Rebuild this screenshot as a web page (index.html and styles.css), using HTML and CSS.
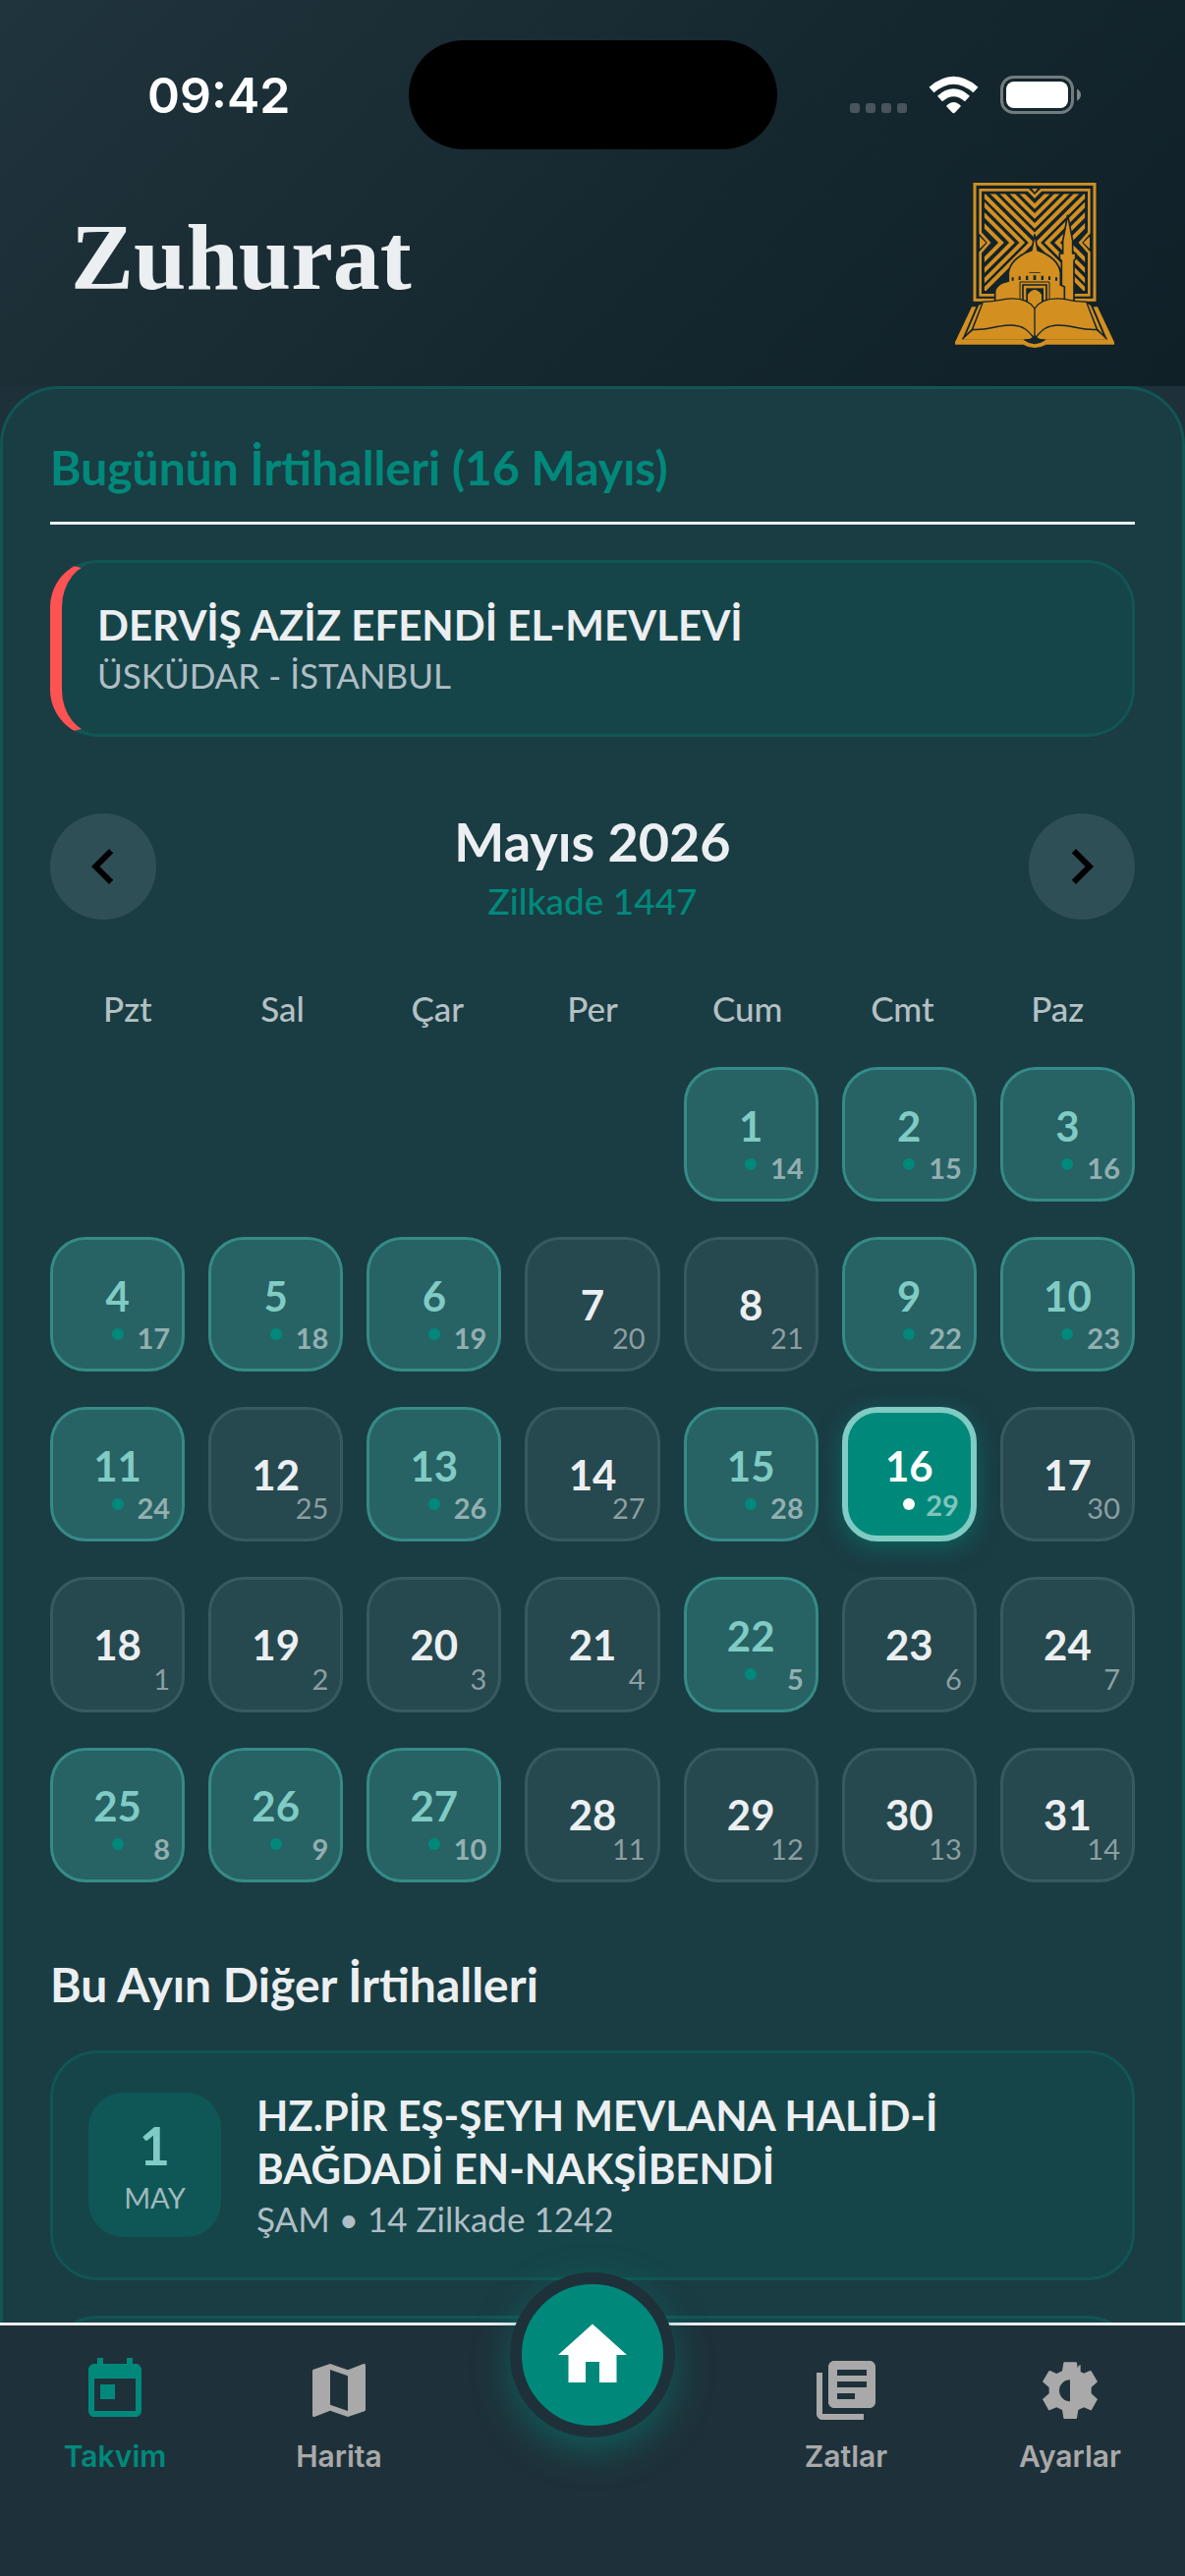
FILE: index.html
```html
<!DOCTYPE html>
<html lang="tr">
<head>
<meta charset="utf-8">
<meta name="viewport" content="width=device-width, initial-scale=1">
<title>Zuhurat</title>
<link rel="stylesheet" href="styles.css">
</head>
<body>
<div class="app">
  <header class="top">
    <div class="status">
      <time class="clock">09:42</time>
      <div class="island"></div>
      <svg class="status-icons" viewBox="0 0 236 40" aria-hidden="true">
        <g fill="#fff" fill-opacity=".22"><rect y="28" width="10" height="10" rx="3"/><rect x="16" y="28" width="10" height="10" rx="3"/><rect x="32" y="28" width="10" height="10" rx="3"/><rect x="48" y="28" width="10" height="10" rx="3"/></g>
        <g fill="none" stroke="#fff" stroke-width="7.500"><path d="M83 14.500Q105.500-5 128 14.500"/><path d="M91.500 23.500Q105.500 11 119.500 23.500"/></g>
        <path fill="#fff" d="M98 31Q105.500 23 113 31L107 37.500Q105.500 39 104 37.500Z"/>
        <rect x="154.500" y="1.500" width="72" height="36" rx="12" fill="none" stroke="#fff" stroke-opacity=".4" stroke-width="3"/>
        <rect x="159" y="6" width="63" height="27" rx="8" fill="#fff"/>
        <path fill="#fff" fill-opacity=".45" d="M231 13.500Q235 15.500 235 19.500T231 25.500Z"/>
      </svg>
    </div>
    <div class="brand">
      <h1 class="brand-name">Zuhurat</h1>
      <svg class="logo" viewBox="66 48 486 504" role="img" aria-label="Zuhurat">
        <defs><clipPath id="field"><path d="M155 82H288L309 100 330 82H463V205L440 231 463 255V378H155V255L178 231 155 205Z"/></clipPath></defs>
        <g fill="none" stroke="#d38f20">
          <rect x="126" y="52" width="366" height="354" stroke-width="9"/>
          <path stroke-width="8" d="M143 70H289L309 90 329 70H475V201L448 231 475 261V391H143V261L170 231 143 201Z"/>
          <g clip-path="url(#field)" stroke-width="12">
            <path d="M229 40 309 120 389 40M189 30 309 150 429 30M159 30 309 180 459 30M129 30 309 208 489 30"/>
            <path d="M52 76 207 231 52 386M85 76 240 231 85 386M116 76 271 231 116 386M144 76 299 231 144 386"/>
            <path d="M566 76 411 231 566 386M533 76 378 231 533 386M502 76 347 231 502 386M474 76 319 231 474 386"/>
          </g>
        </g>
        <path fill="#d38f20" d="M300 66H318L309 77ZM141 212 160 231 141 250ZM477 212 458 231 477 250Z"/>
        <g fill="#d38f20" stroke="#14252c" stroke-width="5">
          <path d="M410 146 425 225V264H434V280L429 286V410H391V286L385 280V264H395V225Z"/>
          <path d="M188 410V380Q190 362 215 352L229 348V322Q236 278 300 254L309 205 318 254Q381 278 388 322V360L400 366V410Z"/>
        </g>
        <g fill="#14252c"><path d="M239 337h6v10h-6zM260 334h6v11h-6zM282 332h7v13h-7zM305 331h8v14h-8zM329 332h7v13h-7zM351 334h6v11h-6zM372 337h6v10h-6zM292 321h34v2h-34z"/></g>
        <g fill="none" stroke="#14252c"><path stroke-width="3" d="M264 410V351H354V410"/><path stroke-width="5" d="M273 410V360H345V410"/></g>
        <path fill="#14252c" d="M283 410V370H336V410Z"/>
        <path fill="#d38f20" d="M288 410V390Q292 380 309 374Q326 380 330 390V440H288Z"/>
        <path fill="#d38f20" stroke="#14252c" stroke-width="4" d="M150 412Q190 410 220 403Q285 396 309 432Q333 396 398 403Q428 410 468 412L500 498 535 528H83L118 498Z"/>
        <path fill="#d38f20" d="M117 427H130L88 526H275Q309 552 343 526H530L488 427H501L552 535V542H344Q309 562 274 542H66V535Z"/>
        <path fill="#d38f20" d="M138 423 150 416 120 494 98 516ZM480 423 468 416 498 494 520 516Z"/>
        <path fill="none" stroke="#14252c" stroke-width="4" d="M309 430V520M118 496C165 500 195 482 240 483 280 485 292 505 307 522M500 496C453 500 423 482 378 483 338 485 326 505 311 522M88 526 118 496 150 415M530 526 500 496 468 415"/>
        <path fill="#14252c" d="M275 528Q300 526 309 512 318 526 343 528 326 540 309 541 292 540 275 528Z"/>
      </svg>
    </div>
  </header>

  <main class="scroll">
    <div class="panel">
      <section>
        <h2 class="section-title section-title--today">Bugünün İrtihalleri (16 Mayıs)</h2>
        <article class="card card--today">
          <h3 class="card-name">DERVİŞ AZİZ EFENDİ EL-MEVLEVİ</h3>
          <p class="card-meta">ÜSKÜDAR - İSTANBUL</p>
        </article>
      </section>

      <section class="calendar">
        <div class="month">
          <button class="round" type="button" aria-label="Önceki ay"><svg class="icon" viewBox="0 0 24 24"><path d="M15.410 7.410 14 6l-6 6 6 6 1.410-1.410L10.830 12z"/></svg></button>
          <div class="month-text">
            <h2 class="month-name">Mayıs 2026</h2>
            <p class="month-hijri">Zilkade 1447</p>
          </div>
          <button class="round" type="button" aria-label="Sonraki ay"><svg class="icon" viewBox="0 0 24 24"><path d="M10 6 8.590 7.410 13.170 12l-4.580 4.590L10 18l6-6z"/></svg></button>
        </div>
        <div class="weekdays"><span>Pzt</span><span>Sal</span><span>Çar</span><span>Per</span><span>Cum</span><span>Cmt</span><span>Paz</span></div>
        <div class="days">
          <button class="day day--event day--first" type="button"><span class="num">1</span><i class="dot"></i><small class="hijri">14</small></button>
          <button class="day day--event" type="button"><span class="num">2</span><i class="dot"></i><small class="hijri">15</small></button>
          <button class="day day--event" type="button"><span class="num">3</span><i class="dot"></i><small class="hijri">16</small></button>
          <button class="day day--event" type="button"><span class="num">4</span><i class="dot"></i><small class="hijri">17</small></button>
          <button class="day day--event" type="button"><span class="num">5</span><i class="dot"></i><small class="hijri">18</small></button>
          <button class="day day--event" type="button"><span class="num">6</span><i class="dot"></i><small class="hijri">19</small></button>
          <button class="day" type="button"><span class="num">7</span><small class="hijri">20</small></button>
          <button class="day" type="button"><span class="num">8</span><small class="hijri">21</small></button>
          <button class="day day--event" type="button"><span class="num">9</span><i class="dot"></i><small class="hijri">22</small></button>
          <button class="day day--event" type="button"><span class="num">10</span><i class="dot"></i><small class="hijri">23</small></button>
          <button class="day day--event" type="button"><span class="num">11</span><i class="dot"></i><small class="hijri">24</small></button>
          <button class="day" type="button"><span class="num">12</span><small class="hijri">25</small></button>
          <button class="day day--event" type="button"><span class="num">13</span><i class="dot"></i><small class="hijri">26</small></button>
          <button class="day" type="button"><span class="num">14</span><small class="hijri">27</small></button>
          <button class="day day--event" type="button"><span class="num">15</span><i class="dot"></i><small class="hijri">28</small></button>
          <button class="day day--event day--today" type="button" aria-current="date"><span class="num">16</span><i class="dot"></i><small class="hijri">29</small></button>
          <button class="day" type="button"><span class="num">17</span><small class="hijri">30</small></button>
          <button class="day" type="button"><span class="num">18</span><small class="hijri">1</small></button>
          <button class="day" type="button"><span class="num">19</span><small class="hijri">2</small></button>
          <button class="day" type="button"><span class="num">20</span><small class="hijri">3</small></button>
          <button class="day" type="button"><span class="num">21</span><small class="hijri">4</small></button>
          <button class="day day--event" type="button"><span class="num">22</span><i class="dot"></i><small class="hijri">5</small></button>
          <button class="day" type="button"><span class="num">23</span><small class="hijri">6</small></button>
          <button class="day" type="button"><span class="num">24</span><small class="hijri">7</small></button>
          <button class="day day--event" type="button"><span class="num">25</span><i class="dot"></i><small class="hijri">8</small></button>
          <button class="day day--event" type="button"><span class="num">26</span><i class="dot"></i><small class="hijri">9</small></button>
          <button class="day day--event" type="button"><span class="num">27</span><i class="dot"></i><small class="hijri">10</small></button>
          <button class="day" type="button"><span class="num">28</span><small class="hijri">11</small></button>
          <button class="day" type="button"><span class="num">29</span><small class="hijri">12</small></button>
          <button class="day" type="button"><span class="num">30</span><small class="hijri">13</small></button>
          <button class="day" type="button"><span class="num">31</span><small class="hijri">14</small></button>
        </div>
      </section>

      <section class="others">
        <h2 class="section-title">Bu Ayın Diğer İrtihalleri</h2>
        <article class="card card--dated">
          <div class="badge"><span class="badge-day">1</span><span class="badge-month">MAY</span></div>
          <div class="card-text">
            <h3 class="card-name">HZ.PİR EŞ-ŞEYH MEVLANA HALİD-İ BAĞDADİ EN-NAKŞİBENDİ</h3>
            <p class="card-meta">ŞAM • 14 Zilkade 1242</p>
          </div>
        </article>
        <article class="card card--dated"></article>
      </section>
    </div>
  </main>

  <nav class="tabs">
    <a class="tab tab--active" href="#takvim"><svg class="icon" viewBox="0 0 24 24"><path d="M19 3h-1V1h-2v2H8V1H6v2H5c-1.110 0-2 .9-2 2v14c0 1.100.89 2 2 2h14c1.100 0 2-.9 2-2V5c0-1.100-.9-2-2-2zm0 16H5V8h14v11zM7 10h5v5H7z"/></svg>Takvim</a>
    <a class="tab" href="#harita"><svg class="icon" viewBox="0 0 24 24"><path d="M20.500 3l-.16.030L15 5.100 9 3 3.360 4.900c-.21.070-.36.250-.36.480V20.500c0 .28.220.5.5.5l.16-.030L9 18.900l6 2.100 5.640-1.900c.21-.070.36-.250.36-.480V3.500c0-.28-.220-.5-.5-.5zM15 19l-6-2.110V5l6 2.110V19z"/></svg>Harita</a>
    <a class="home" href="#ana" aria-label="Ana sayfa"><svg class="home-icon" viewBox="0 0 24 24"><path d="M10 20v-6h4v6h5v-8h3L12 3 2 12h3v8z"/></svg></a>
    <a class="tab" href="#zatlar"><svg class="icon" viewBox="0 0 24 24"><path d="M4 6H2v14c0 1.100.9 2 2 2h14v-2H4V6zm16-4H8c-1.100 0-2 .9-2 2v12c0 1.100.9 2 2 2h12c1.100 0 2-.9 2-2V4c0-1.100-.9-2-2-2zm-1 9H9V9h10v2zm-4 4H9v-2h6v2zm4-8H9V5h10v2z"/></svg>Zatlar</a>
    <a class="tab" href="#ayarlar"><svg class="icon" viewBox="159 50 216 216"><path fill-rule="evenodd" d="M250 72H285Q288 72 288 75L290 90 294 82 299 80V101L309 106 328 98Q331 98 333 101L351 132 332 149V168L351 185 333 217Q331 220 328 218L309 210 292 218 288 242Q288 245 285 245H250Q247 245 247 242L243 218 226 210 206 218Q203 220 201 217L183 185 203 168V149L183 132 201 101Q203 98 206 98L226 107 243 99 247 75Q247 72 250 72ZM267 126A33 33 0 0 0 267 192Z"/></svg>Ayarlar</a>
  </nav>
</div>
</body>
</html>
```

FILE: styles.css
```css
:root {
  --bg: #1e313a;
  --teal: #00897b;
  --mint: #80cbc4;
  --text: #eceff1;
  --muted: #b0bec5;
  --edge: #115554;
}

* { box-sizing: border-box; }

body {
  margin: 0;
  background: var(--bg);
  color: var(--text);
  font-family: Lato, "Noto Sans", sans-serif;
}

h1, h2, h3, p { margin: 0; font-weight: 700; }
button { padding: 0; border: 0; font: inherit; color: inherit; cursor: pointer; }
a { color: inherit; text-decoration: none; }

.app { display: flex; flex-direction: column; height: 100vh; }

/* Header */
.top {
  flex: none;
  padding: 41px 0 39px;
  background: linear-gradient(135deg, #20343d, #16282f 55%, #0f2027);
}
.status {
  display: grid;
  grid-template-columns: 1fr 375px 1fr;
  align-items: center;
  height: 111px;
}
.clock {
  padding-left: 30px;
  text-align: center;
  color: #fff;
  font: 600 50px/60px Inter, sans-serif;
}
.island { height: 111px; border-radius: 56px; background: #000; }
.status-icons { justify-self: center; width: 236px; height: 40px; margin-right: 30px; }

.brand {
  display: flex;
  align-items: center;
  justify-content: space-between;
  padding: 34px 72px 0;
}
.brand-name { padding-bottom: 16px; font: 700 96px/108px "Liberation Serif", serif; }
.logo { width: 162px; height: 168px; }

/* Scrolling content */
.scroll { flex: 1; min-height: 0; overflow-y: auto; scrollbar-width: none; }
.panel {
  padding: 48px;
  border: 3px solid var(--edge);
  border-radius: 60px 60px 0 0;
  background: #1a3c43;
}
.section-title { font-size: 48px; line-height: 63px; }
.section-title--today {
  margin-bottom: 36px;
  padding-bottom: 24px;
  border-bottom: 3px solid var(--text);
  color: var(--teal);
}

.card {
  padding: 36px;
  border: 3px solid var(--edge);
  border-radius: 48px;
  background: #164549;
}
.card--today { border-left: 12px solid #ff5252; }
.card--dated { display: flex; align-items: center; gap: 36px; min-height: 180px; }
.card-name { font-size: 42px; line-height: 54px; }
.card-meta { color: var(--muted); font-size: 35px; font-weight: 400; line-height: 48px; }
.card-text { flex: 1; }

.badge {
  display: flex;
  flex-direction: column;
  align-items: center;
  justify-content: center;
  width: 135px;
  height: 147px;
  border-radius: 36px;
  background: #0f5757;
}
.badge-day { color: var(--mint); font-size: 54px; font-weight: 700; line-height: 66px; }
.badge-month { color: #9fb9bb; font-size: 29px; line-height: 39px; }

/* Calendar */
.calendar { padding-top: 72px; }
.month { display: flex; align-items: center; justify-content: space-between; }
.month-text { text-align: center; }
.month-name { font-size: 54px; line-height: 69px; }
.month-hijri { color: var(--teal); font-size: 37px; font-weight: 500; line-height: 51px; }
.round {
  display: grid;
  place-items: center;
  width: 108px;
  height: 108px;
  border-radius: 50%;
  background: #2f4f56;
  color: #000;
}
.icon { display: block; width: 72px; height: 72px; fill: currentColor; }

.weekdays {
  display: grid;
  grid-template-columns: repeat(7, 1fr);
  margin-top: 60px;
  color: #b4c1c4;
  font-size: 35px;
  font-weight: 500;
  line-height: 48px;
  text-align: center;
}
.days {
  display: grid;
  grid-template-columns: repeat(7, 1fr);
  gap: 36px 24px;
  margin-top: 36px;
}
.day {
  position: relative;
  display: flex;
  flex-direction: column;
  align-items: center;
  justify-content: center;
  gap: 6px;
  aspect-ratio: 1;
  border: 3px solid #385960;
  border-radius: 36px;
  background: #26484f;
}
.day--first { grid-column: 5; }
.num { font-size: 42px; font-weight: 700; line-height: 54px; }
.dot { width: 12px; height: 12px; border-radius: 50%; background: var(--teal); }
.hijri {
  position: absolute;
  right: 12px;
  bottom: 12px;
  color: #8b9fa2;
  font-size: 29px;
  line-height: 39px;
}
.day--event { border-color: #358b87; background: #276265; }
.day--event .num { color: var(--mint); }
.day--event .hijri { color: #93afb0; font-weight: 700; }
.day--today {
  border: 6px solid var(--mint);
  background: var(--teal);
  box-shadow: 0 6px 24px rgba(0, 137, 123, .5);
}
.day--today .num { color: #fff; }
.day--today .dot { background: #fff; }
.day--today .hijri { color: #80c4bd; }

.others { display: grid; gap: 36px; padding-top: 72px; }

/* Bottom tabs */
.tabs {
  flex: none;
  display: grid;
  grid-template-columns: 1fr 1fr 288px 1fr 1fr;
  align-items: start;
  height: 258px;
  padding: 30px 3px 0;
  border-top: 3px solid var(--text);
  background: var(--bg);
}
.tab {
  display: flex;
  flex-direction: column;
  align-items: center;
  gap: 12px;
  color: #a9a9a9;
  font: 600 30px/39px Inter, sans-serif;
}
.tab--active { color: var(--teal); }
.home {
  display: grid;
  place-items: center;
  justify-self: center;
  width: 168px;
  height: 168px;
  margin-top: -84px;
  border: 12px solid var(--bg);
  border-radius: 50%;
  background: var(--teal);
  box-shadow: 0 12px 36px rgba(0, 137, 123, .5);
}
.home-icon { width: 84px; height: 84px; fill: #fff; }
```
